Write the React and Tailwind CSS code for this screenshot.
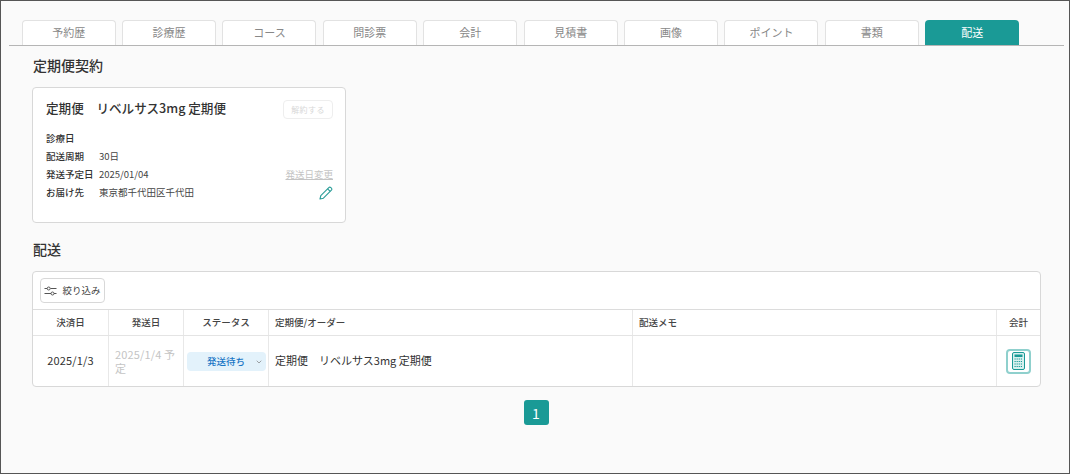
import React from 'react';
import { ChevronDown } from 'lucide-react';

const tabs = ['予約歴', '診療歴', 'コース', '問診票', '会計', '見積書', '画像', 'ポイント', '書類', '配送'];

function SlidersIcon() {
  return (
    <svg width="13" height="10" viewBox="0 0 13 10" fill="none" stroke="#555" strokeWidth="1">
      <path d="M0.5 2.5H3M6.5 2.5H12.5M0.5 7.5H7M10 7.5H12.5" />
      <circle cx="4.7" cy="2.5" r="1.5" />
      <circle cx="8.5" cy="7.5" r="1.5" />
    </svg>
  );
}

function PencilIcon() {
  return (
    <svg width="14" height="14" viewBox="0 0 14 14" fill="none" stroke="#2a9d98" strokeWidth="1.1" strokeLinejoin="round">
      <path d="M1 13L1.8 9.6L9.8 1.6C10.4 1 11.2 1 11.8 1.6L12.4 2.2C13 2.8 13 3.6 12.4 4.2L4.4 12.2L1 13Z" />
      <path d="M8.6 2.8L11.2 5.4" />
    </svg>
  );
}

function CalculatorIcon() {
  return (
    <svg width="13" height="18" viewBox="0 0 13 18">
      <rect x="0.5" y="0.5" width="12" height="17" rx="1.5" fill="#d8f0ee" stroke="#1a9a96" />
      <rect x="2.5" y="2.5" width="8" height="2.5" fill="#1a9a96" />
      <path d="M2.5 7H10.5M2.5 9.5H10.5M2.5 12H10.5M2.5 14.5H10.5" stroke="#1a9a96" strokeWidth="1.2" strokeDasharray="1.2 0.9" />
    </svg>
  );
}

function Info({ label, children }) {
  return (
    <div className="flex h-[18px] items-center">
      <span className="w-[53px] shrink-0 text-[9.5px] font-medium text-[#333]">{label}</span>
      <span className="text-[9.5px] text-[#444]">{children}</span>
    </div>
  );
}

export default function App() {
  return (
    <div className="h-[474px] w-[1070px] border border-[#555] bg-[#fafafa] font-['Noto_Sans_CJK_JP',sans-serif]">
      {/* Tabs */}
      <div className="ml-2 mr-[5px] mt-[19px] flex h-[26px] gap-[6.4px] border-b border-[#b5b5b5] pl-[12.7px]">
        {tabs.map((tab, i) => (
          <div
            key={tab}
            className={
              i === tabs.length - 1
                ? 'flex h-[25px] w-[94px] items-center justify-center rounded-t bg-[#1a9a96] pb-px text-[11px] text-white'
                : 'flex h-[25px] w-[94px] items-center justify-center rounded-t border border-b-0 border-[#e2e2e2] bg-white pb-px text-[11px] text-[#888]'
            }
          >
            {tab}
          </div>
        ))}
      </div>

      <div className="pl-[31px] pr-[29px]">
        <h2 className="mt-[10px] h-[21px] pl-px text-sm leading-[19px] font-medium text-[#333]">定期便契約</h2>

        {/* Contract card */}
        <div className="mt-[10px] h-[136px] w-[314px] rounded border border-[#d8d8d8] bg-white pl-[13px] pr-3 pt-3">
          <div className="flex h-[19px] items-center justify-between">
            <span className="pb-[2px] text-[12.6px] font-medium text-[#333]">定期便　リベルサス3mg 定期便</span>
            <span className="flex h-[19px] w-[50px] items-center justify-center rounded border border-[#eee] text-[8px] tracking-wider text-[#d8d8d8]">解約する</span>
          </div>
          <div className="relative mt-[10px]">
            <Info label="診療日" />
            <Info label="配送周期">30日</Info>
            <Info label="発送予定日">2025/01/04</Info>
            <Info label="お届け先">東京都千代田区千代田</Info>
            <span className="absolute right-0 top-[36px] text-[9.5px] leading-[18px] text-[#c4c4c4] underline">発送日変更</span>
            <span className="absolute right-0 top-[57px]"><PencilIcon /></span>
          </div>
        </div>

        <h2 className="mt-[17px] h-[21px] pl-px text-sm leading-[19px] font-medium text-[#333]">配送</h2>

        {/* Delivery table */}
        <div className="mt-[10px] w-[1009px] rounded border border-[#d8d8d8] bg-white">
          <div className="flex h-[38px] items-center border-b border-[#dcdcdc] pl-[7px]">
            <button className="flex h-[25px] w-[65px] items-center justify-center gap-[5px] rounded border border-[#d8d8d8] text-[9.5px] text-[#444]">
              <SlidersIcon />
              絞り込み
            </button>
          </div>
          <div className="grid h-[26px] grid-cols-[76px_75px_85px_364px_364px_1fr] border-b border-[#e4e4e4] text-[9.5px] font-medium leading-[25px] text-[#444]">
            <div className="border-r border-[#e8e8e8] text-center">決済日</div>
            <div className="border-r border-[#e8e8e8] text-center">発送日</div>
            <div className="border-r border-[#e8e8e8] text-center">ステータス</div>
            <div className="border-r border-[#e8e8e8] pl-[6px]">定期便/オーダー</div>
            <div className="border-r border-[#e8e8e8] pl-[6px]">配送メモ</div>
            <div className="text-center">会計</div>
          </div>
          <div className="grid h-[50px] grid-cols-[76px_75px_85px_364px_364px_1fr] text-[11px] text-[#333]">
            <div className="flex items-center justify-center border-r border-[#e8e8e8] pb-px tracking-[0.15px]">2025/1/3</div>
            <div className="flex items-center border-r border-[#e8e8e8] pl-[6px] pr-1 leading-[14px] tracking-[0.15px] text-[#c4c4c4]">2025/1/4 予定</div>
            <div className="flex items-center justify-center border-r border-[#e8e8e8]">
              <div className="relative flex h-[19px] w-[79px] items-center justify-center rounded bg-[#e3f2fb] text-[9.5px] font-medium text-[#1976c5]">
                発送待ち
                <ChevronDown className="absolute right-[3px] top-[6px] h-[8px] w-[8px] text-[#777]" />
              </div>
            </div>
            <div className="flex items-center border-r border-[#e8e8e8] pb-px pl-[6px]">定期便　リベルサス3mg 定期便</div>
            <div className="border-r border-[#e8e8e8]"></div>
            <div className="flex items-center justify-center">
              <button className="flex h-[25px] w-[25px] items-center justify-center rounded border-2 border-[#8fd0cd]">
                <CalculatorIcon />
              </button>
            </div>
          </div>
        </div>

        {/* Pagination */}
        <div className="mt-[13px] flex w-[1008px] justify-center">
          <div className="flex h-[25px] w-[25px] items-center justify-center rounded-[3px] bg-[#1a9a96] text-sm text-white">1</div>
        </div>
      </div>
    </div>
  );
}
